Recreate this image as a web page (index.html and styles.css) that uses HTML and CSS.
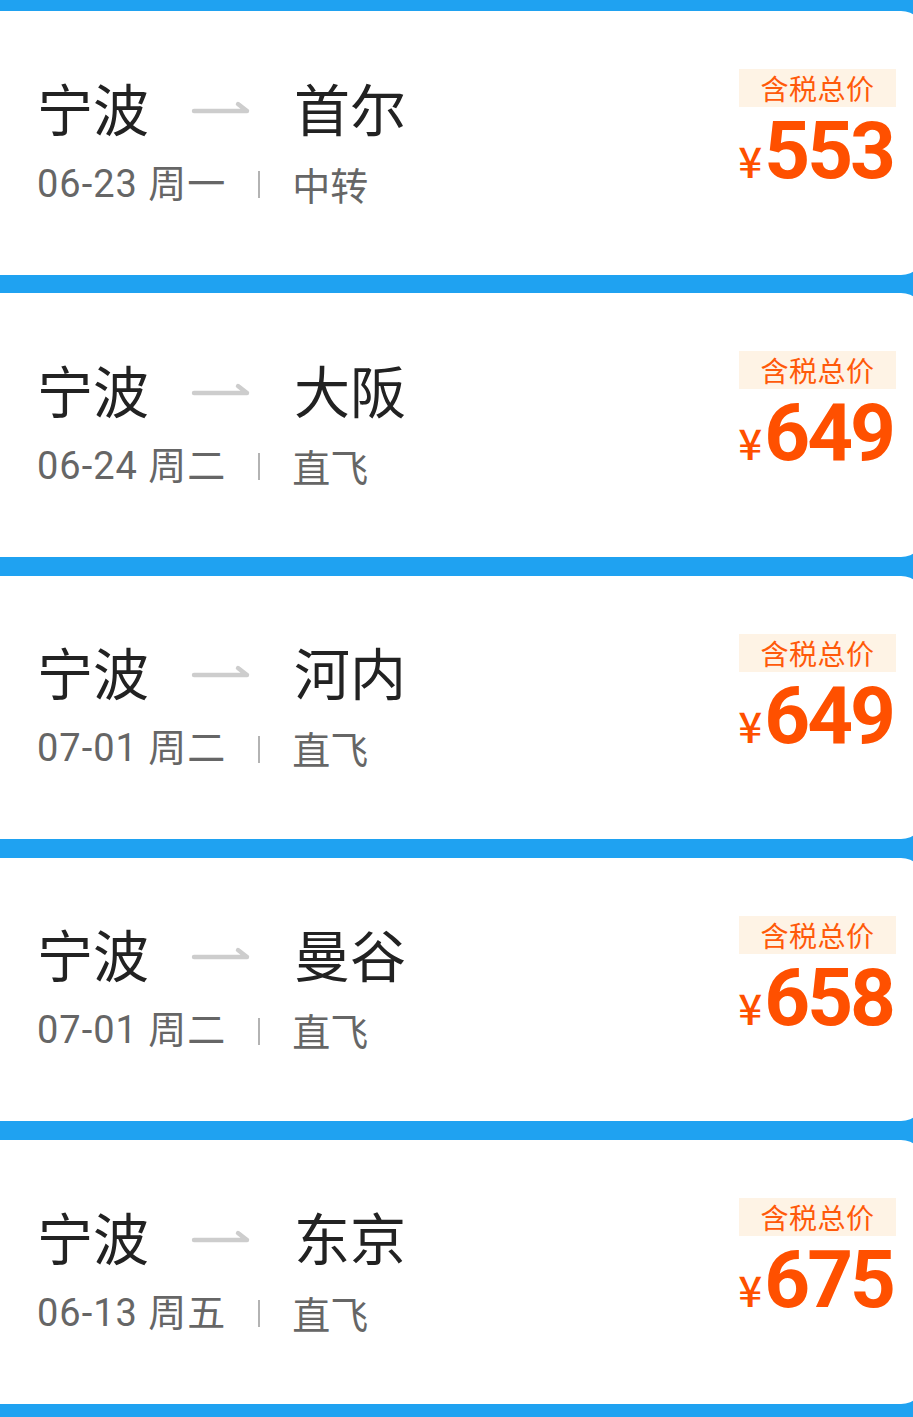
FILE: index.html
```html
<!DOCTYPE html>
<html lang="zh-CN">
<head>
<meta charset="utf-8">
<title>航线特价</title>
<link rel="stylesheet" href="styles.css">
</head>
<body>
<div class="list">
  <div class="card">
    <div class="info">
      <div class="route">
        <span class="city">宁波</span>
        <svg class="arrow" width="60" height="16" viewBox="0 0 60 16"><path d="M3 12 H56 M47 5 L56 12" fill="none" stroke="#cdcdcd" stroke-width="4.4" stroke-linecap="round" stroke-linejoin="round"/></svg>
        <span class="city dest">首尔</span>
      </div>
      <div class="meta">
        <span class="date">06-23 周一</span>
        <span class="sep"></span>
        <span class="type">中转</span>
      </div>
    </div>
    <div class="price-col">
      <div class="tag">含税总价</div>
      <div class="price"><span class="yen">¥</span><span class="num">553</span></div>
    </div>
  </div>

  <div class="card">
    <div class="info">
      <div class="route">
        <span class="city">宁波</span>
        <svg class="arrow" width="60" height="16" viewBox="0 0 60 16"><path d="M3 12 H56 M47 5 L56 12" fill="none" stroke="#cdcdcd" stroke-width="4.4" stroke-linecap="round" stroke-linejoin="round"/></svg>
        <span class="city dest">大阪</span>
      </div>
      <div class="meta">
        <span class="date">06-24 周二</span>
        <span class="sep"></span>
        <span class="type">直飞</span>
      </div>
    </div>
    <div class="price-col">
      <div class="tag">含税总价</div>
      <div class="price"><span class="yen">¥</span><span class="num">649</span></div>
    </div>
  </div>

  <div class="card">
    <div class="info">
      <div class="route">
        <span class="city">宁波</span>
        <svg class="arrow" width="60" height="16" viewBox="0 0 60 16"><path d="M3 12 H56 M47 5 L56 12" fill="none" stroke="#cdcdcd" stroke-width="4.4" stroke-linecap="round" stroke-linejoin="round"/></svg>
        <span class="city dest">河内</span>
      </div>
      <div class="meta">
        <span class="date">07-01 周二</span>
        <span class="sep"></span>
        <span class="type">直飞</span>
      </div>
    </div>
    <div class="price-col">
      <div class="tag">含税总价</div>
      <div class="price"><span class="yen">¥</span><span class="num">649</span></div>
    </div>
  </div>

  <div class="card">
    <div class="info">
      <div class="route">
        <span class="city">宁波</span>
        <svg class="arrow" width="60" height="16" viewBox="0 0 60 16"><path d="M3 12 H56 M47 5 L56 12" fill="none" stroke="#cdcdcd" stroke-width="4.4" stroke-linecap="round" stroke-linejoin="round"/></svg>
        <span class="city dest">曼谷</span>
      </div>
      <div class="meta">
        <span class="date">07-01 周二</span>
        <span class="sep"></span>
        <span class="type">直飞</span>
      </div>
    </div>
    <div class="price-col">
      <div class="tag">含税总价</div>
      <div class="price"><span class="yen">¥</span><span class="num">658</span></div>
    </div>
  </div>

  <div class="card">
    <div class="info">
      <div class="route">
        <span class="city">宁波</span>
        <svg class="arrow" width="60" height="16" viewBox="0 0 60 16"><path d="M3 12 H56 M47 5 L56 12" fill="none" stroke="#cdcdcd" stroke-width="4.4" stroke-linecap="round" stroke-linejoin="round"/></svg>
        <span class="city dest">东京</span>
      </div>
      <div class="meta">
        <span class="date">06-13 周五</span>
        <span class="sep"></span>
        <span class="type">直飞</span>
      </div>
    </div>
    <div class="price-col">
      <div class="tag">含税总价</div>
      <div class="price"><span class="yen">¥</span><span class="num">675</span></div>
    </div>
  </div>
</div>
</body>
</html>
```

FILE: styles.css
```css
html, body {
  margin: 0;
  padding: 0;
}

body {
  background: #1fa2f1;
  overflow: hidden;
  font-family: "Noto Sans CJK SC", "Noto Sans", sans-serif;
}

.list {
  display: flex;
  flex-direction: column;
  gap: 18.75px;
  padding-top: 11px;
  width: 925px;
}

.card {
  height: 263.5px;
  box-sizing: border-box;
  background: #ffffff;
  border-radius: 0 24px 24px 0;
  display: flex;
  justify-content: space-between;
  align-items: flex-start;
  padding: 0 29px 0 37px;
}

.info {
  padding-top: 67.5px;
  display: flex;
  flex-direction: column;
}

.route {
  display: flex;
  align-items: flex-start;
  height: 56px;
}

.city {
  font-size: 56px;
  line-height: 56px;
  color: #222222;
  font-weight: 400;
  white-space: nowrap;
}

.arrow {
  display: block;
  margin: 20px 43px 0 42px;
}

.meta {
  margin-top: 30px;
  display: flex;
  align-items: center;
  height: 38px;
}

.date, .type {
  font-size: 38px;
  line-height: 38px;
  color: #666666;
  white-space: nowrap;
}

.date {
  font-family: Roboto, "Noto Sans CJK SC", sans-serif;
  letter-spacing: 1px;
}

.sep {
  display: block;
  width: 2px;
  height: 27px;
  background: #b3b3b3;
  margin: 2px 32px 0 32px;
}

.price-col {
  padding-top: 58px;
  display: flex;
  flex-direction: column;
  align-items: flex-end;
}

.tag {
  width: 157px;
  height: 38px;
  box-sizing: border-box;
  background: #fef3e5;
  color: #ff5a0a;
  font-size: 28px;
  line-height: 38px;
  text-align: center;
  letter-spacing: 0.5px;
}

.price {
  margin-top: 4px;
  margin-right: 3px;
  height: 80px;
  display: flex;
  align-items: baseline;
  color: #ff5000;
  white-space: nowrap;
}

.yen {
  font-family: "Noto Sans CJK SC", sans-serif;
  font-size: 42px;
  font-weight: 500;
  margin-right: 2px;
}

.num {
  font-family: Roboto, "Liberation Sans", sans-serif;
  font-weight: 700;
  font-size: 80px;
  line-height: 80px;
  letter-spacing: -3px;
}
```
